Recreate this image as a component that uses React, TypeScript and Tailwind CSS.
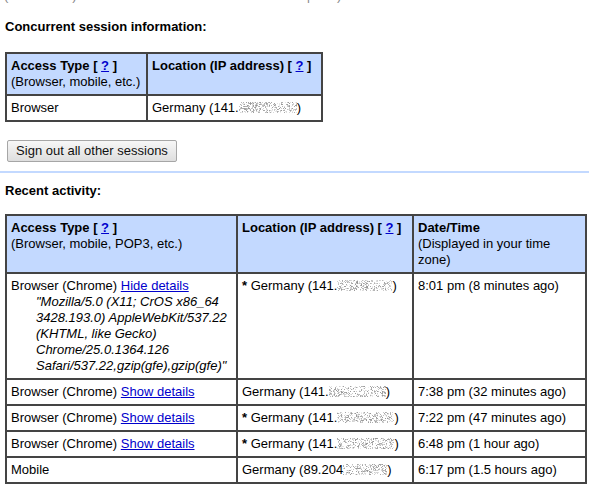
const Blur = ({ w, seed }: { w: number; seed: number }) => {
  // pixelated smear standing in for the hidden part of the IP address
  const cells: { x: number; y: number; c: string }[] = [];
  let s = seed;
  const rnd = () => {
    s = (s * 9301 + 49297) % 233280;
    return s / 233280;
  };
  for (let y = 1; y < 12; y++) {
    for (let x = 0; x < w; x++) {
      const r = rnd();
      if (r < 0.45) {
        const g = Math.floor(150 + rnd() * 90);
        cells.push({ x, y, c: `rgb(${g},${g},${g})` });
      }
    }
  }
  return (
    <svg width={w} height={13} className="inline-block align-[-2px]">
      {cells.map((p, i) => (
        <rect key={i} x={p.x} y={p.y} width={1} height={1} fill={p.c} />
      ))}
    </svg>
  );
};

const Help = () => (
  <>
    [ <a className="text-[#0000cc] underline">?</a> ]
  </>
);

const Details = ({ open }: { open?: boolean }) => (
  <a className="text-[#0000cc] underline">{open ? 'Hide details' : 'Show details'}</a>
);

const td = 'border-2 border-[#444] px-[4px] py-[4px] align-top text-left';
const th = 'border-2 border-[#444] px-[4px] py-[4px] align-top text-left bg-[#c3d9ff] font-normal';

const activity = [
  { type: 'Browser (Chrome)', link: false, star: false, ip: '141.', blur: 57, time: '7:38 pm (32 minutes ago)' },
  { type: 'Browser (Chrome)', link: false, star: true, ip: '141.', blur: 57, time: '7:22 pm (47 minutes ago)' },
  { type: 'Browser (Chrome)', link: false, star: true, ip: '141.', blur: 57, time: '6:48 pm (1 hour ago)' },
  { type: 'Mobile', link: null, star: false, ip: '89.204', blur: 44, time: '6:17 pm (1.5 hours ago)' },
];

export default function App() {
  return (
    <div className="h-[484px] overflow-hidden bg-white text-[13px] leading-4 text-black font-['Liberation_Sans',Arial,sans-serif]">
      <div className="h-[4px] overflow-hidden">
        <div className="-mt-[12px] flex text-[#888] whitespace-pre">
          <span className="ml-[4px]">(</span>
          <span className="w-[64px]" />
          <span>)</span>
          <span className="w-[230px]" />
          <span>|</span>
          <span className="w-[27px]" />
          <span>)</span>
        </div>
      </div>

      <div className="px-[5px]">
        <h2 className="mt-[15px] font-bold">Concurrent session information:</h2>

        <table className="mt-[17px] border-collapse table-fixed w-[318px] border-2 border-[#444]">
          <colgroup>
            <col className="w-[141px]" />
            <col />
          </colgroup>
          <thead>
            <tr>
              <th className={th}>
                <b>
                  Access Type <Help />
                </b>
                <br />
                (Browser, mobile, etc.)
              </th>
              <th className={th}>
                <b>
                  Location (IP address) <Help />
                </b>
              </th>
            </tr>
          </thead>
          <tbody>
            <tr>
              <td className={td}>Browser</td>
              <td className={td + ' whitespace-nowrap'}>
                Germany (141.
                <Blur w={58} seed={17} />)
              </td>
            </tr>
          </tbody>
        </table>

        <button className="mt-[18px] ml-[2px] h-[22px] w-[170px] rounded-[2px] border border-[#a6a6a6] bg-gradient-to-b from-[#f7f7f7] to-[#dedede] text-[13px] text-[#111]">
          Sign out all other sessions
        </button>
      </div>

      <div className="mt-[9px] h-[2px] bg-[#c3d9ff]" />

      <div className="px-[5px]">
        <h2 className="mt-[10px] font-bold">Recent activity:</h2>

        <table className="mt-[15px] border-collapse table-fixed w-[582px] border-2 border-[#444]">
          <colgroup>
            <col className="w-[231px]" />
            <col className="w-[176px]" />
            <col />
          </colgroup>
          <thead>
            <tr>
              <th className={th}>
                <b>
                  Access Type <Help />
                </b>
                <br />
                (Browser, mobile, POP3, etc.)
              </th>
              <th className={th}>
                <b>
                  Location (IP address) <Help />
                </b>
              </th>
              <th className={th}>
                <b>Date/Time</b>
                <br />
                (Displayed in your time zone)
              </th>
            </tr>
          </thead>
          <tbody>
            <tr>
              <td className={td}>
                Browser (Chrome) <Details open />
                <div className="ml-[25px] italic whitespace-nowrap">
                  "Mozilla/5.0 (X11; CrOS x86_64
                  <br />
                  3428.193.0) AppleWebKit/537.22
                  <br />
                  (KHTML, like Gecko)
                  <br />
                  Chrome/25.0.1364.126
                  <br />
                  Safari/537.22,gzip(gfe),gzip(gfe)"
                </div>
              </td>
              <td className={td + ' whitespace-nowrap'}>
                <b>*</b> Germany (141.
                <Blur w={55} seed={41} />)
              </td>
              <td className={td}>8:01 pm (8 minutes ago)</td>
            </tr>
            {activity.map((a, i) => (
              <tr key={i}>
                <td className={td}>
                  {a.type}
                  {a.link !== null && (
                    <>
                      {' '}
                      <Details />
                    </>
                  )}
                </td>
                <td className={td + ' whitespace-nowrap'}>
                  {a.star && <b>* </b>}Germany ({a.ip}
                  <Blur w={a.blur} seed={73 + i * 29} />)
                </td>
                <td className={td}>{a.time}</td>
              </tr>
            ))}
          </tbody>
        </table>
      </div>
    </div>
  );
}
